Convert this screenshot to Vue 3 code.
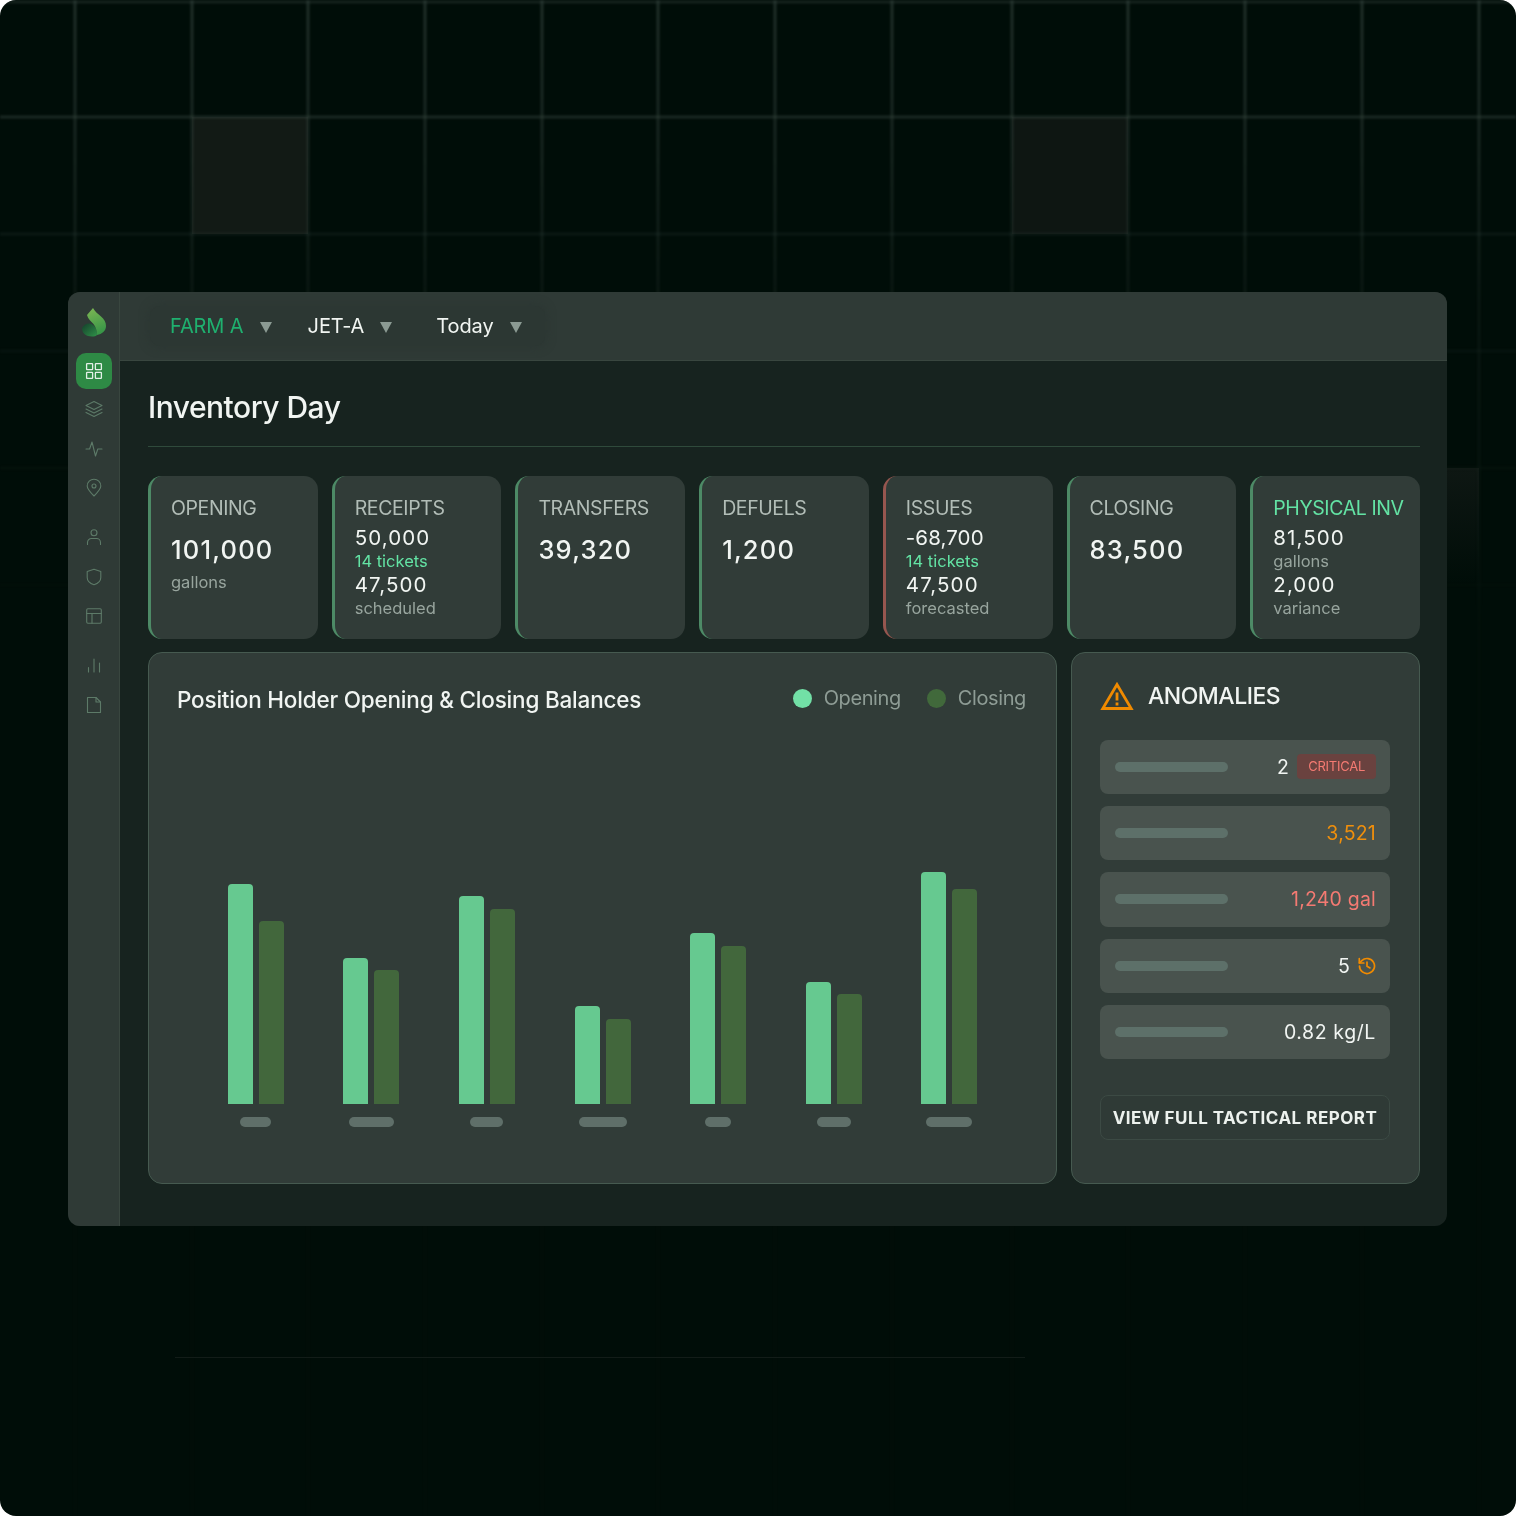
<script setup>
const gridX = [75, 192, 308, 425, 542, 658, 775, 892, 1012, 1128, 1245, 1362, 1479]
const gridY = [2, 117, 234, 351, 468, 585]

const navIcons = [
  { id: 'layers', gap: false },
  { id: 'pulse', gap: false },
  { id: 'pin', gap: true },
  { id: 'user', gap: false },
  { id: 'shield', gap: false },
  { id: 'layout', gap: true },
  { id: 'bars', gap: false },
  { id: 'file', gap: false }
]

const filters = [
  { label: 'FARM A', active: true },
  { label: 'JET-A', active: false },
  { label: 'Today', active: false }
]

const cards = [
  { title: 'OPENING', big: '101,000', sub: 'gallons' },
  { title: 'RECEIPTS', lines: [['50,000', '14 tickets', true], ['47,500', 'scheduled', false]] },
  { title: 'TRANSFERS', big: '39,320' },
  { title: 'DEFUELS', big: '1,200' },
  { title: 'ISSUES', red: true, lines: [['-68,700', '14 tickets', true], ['47,500', 'forecasted', false]] },
  { title: 'CLOSING', big: '83,500' },
  { title: 'PHYSICAL INV', mint: true, lines: [['81,500', 'gallons', false], ['2,000', 'variance', false]] }
]

const bars = [
  { open: 220, close: 183, label: 31 },
  { open: 146, close: 134, label: 45 },
  { open: 208, close: 195, label: 33 },
  { open: 98, close: 85, label: 48 },
  { open: 171, close: 158, label: 26 },
  { open: 122, close: 110, label: 34 },
  { open: 232, close: 215, label: 46 }
]
</script>

<template>
  <div class="page">
    <svg class="backdrop" width="1516" height="1516" viewBox="0 0 1516 1516">
      <defs>
        <linearGradient id="fade" x1="0" y1="0" x2="0" y2="1">
          <stop offset="0" stop-color="#34443e" stop-opacity="0.6" />
          <stop offset="0.1" stop-color="#34443e" stop-opacity="0.42" />
          <stop offset="0.2" stop-color="#34443e" stop-opacity="0.18" />
          <stop offset="0.4" stop-color="#34443e" stop-opacity="0.05" />
          <stop offset="1" stop-color="#34443e" stop-opacity="0.02" />
        </linearGradient>
        <linearGradient id="sidefade" x1="0" y1="0" x2="0" y2="1">
          <stop offset="0" stop-color="#0e1713" />
          <stop offset="1" stop-color="#000d08" />
        </linearGradient>
      </defs>
      <rect x="192" y="117" width="116" height="117" fill="#121a15" />
      <rect x="1012" y="117" width="116" height="117" fill="#0e1612" />
      <rect x="1447" y="468" width="32" height="117" fill="url(#sidefade)" />
      <g class="soft">
        <rect v-for="x in gridX" :key="x" :x="x - 1.5" y="0" width="3" height="1516" fill="url(#fade)" />
        <rect v-for="(y, i) in gridY" :key="y" x="0" :y="y - 1.5" width="1516" height="3" fill="#34443e" :opacity="[0.4, 0.5, 0.22, 0.12, 0.07, 0.04][i]" />
      </g>
      <rect x="175" y="1357" width="850" height="1" fill="#121c18" />
    </svg>

    <div class="window">
      <aside class="sidebar">
        <svg class="logo" width="26" height="30" viewBox="0 0 26 30">
          <defs>
            <linearGradient id="leafTop" x1="0.3" y1="0" x2="0.6" y2="1">
              <stop offset="0" stop-color="#79b553" />
              <stop offset="1" stop-color="#359447" />
            </linearGradient>
            <linearGradient id="leafLow" x1="0" y1="0" x2="1" y2="1">
              <stop offset="0" stop-color="#143f2b" />
              <stop offset="1" stop-color="#2f9048" />
            </linearGradient>
          </defs>
          <path d="M1 21c2-4 7-6 11-3 3 2 4 6 4 10-1 1-3 1.5-5 1.5-6 0-10-3-10-8.500z" fill="url(#leafLow)" />
          <path d="M12 1L6 8c1 4 4 6 6.5 9 2.5 3 3.5 7 3.5 11 5-1 9-4 9-9 0-4-2-7-5-9.5C17 7 14 4.5 12 1z" fill="url(#leafTop)" />
        </svg>
        <div class="nav-active">
          <svg width="18" height="18" viewBox="0 0 18 18" fill="none" stroke="#e4f0e8" stroke-width="1.3">
            <rect x="1.6" y="1.6" width="6" height="6" rx="0.6" />
            <rect x="10.4" y="1.6" width="6" height="6" rx="0.6" />
            <rect x="1.6" y="10.4" width="6" height="6" rx="0.6" />
            <rect x="10.4" y="10.4" width="6" height="6" rx="0.6" />
          </svg>
        </div>
        <div v-for="item in navIcons" :key="item.id" class="nav-item" :class="{ spaced: item.gap }">
          <svg width="20" height="20" viewBox="0 0 20 20" fill="none" stroke="#5d7a68" stroke-width="1.1" stroke-linecap="round" stroke-linejoin="round">
            <template v-if="item.id === 'layers'">
              <path d="M10 2.5l8 4-8 4-8-4z" />
              <path d="M2 10l8 4 8-4" />
              <path d="M2 13.4l8 4 8-4" />
            </template>
            <path v-else-if="item.id === 'pulse'" d="M2 10h3.6l2.4-7 3.5 14 2.3-7H18" />
            <template v-else-if="item.id === 'pin'">
              <path d="M10 18c-4-4-6.8-7-6.8-10a6.8 6.8 0 0 1 13.6 0c0 3-2.8 6-6.8 10z" />
              <circle cx="10" cy="8" r="2" />
            </template>
            <template v-else-if="item.id === 'user'">
              <circle cx="10" cy="5.8" r="3" />
              <path d="M3.5 17.5v-2a4 4 0 0 1 4-4h5a4 4 0 0 1 4 4v2" />
            </template>
            <path v-else-if="item.id === 'shield'" d="M10 2.2l6.8 2.3v6c0 3.6-3 6-6.8 7.3-3.8-1.3-6.8-3.7-6.8-7.3v-6z" />
            <template v-else-if="item.id === 'layout'">
              <rect x="2.7" y="2.7" width="14.6" height="14.6" rx="1.2" />
              <path d="M2.7 7.5h14.6M8 7.5v9.800" />
            </template>
            <path v-else-if="item.id === 'bars'" d="M4.5 17v-4.500M10 17V4M15.500 17V8" />
            <template v-else>
              <path d="M3.5 2.500h8.500l4.500 4.500v10.500h-13z" />
              <path d="M12 2.500V7h4.500" />
            </template>
          </svg>
        </div>
      </aside>

      <div class="body">
        <header class="topbar">
          <div class="filters">
            <div v-for="f in filters" :key="f.label" class="filter" :class="{ active: f.active }">
              <span>{{ f.label }}</span>
              <i class="caret"></i>
            </div>
          </div>
        </header>

        <main class="content">
          <h1 class="title">Inventory Day</h1>

          <section class="cards">
            <div v-for="c in cards" :key="c.title" class="card" :class="{ red: c.red }">
              <div class="card-title" :class="{ mint: c.mint }">{{ c.title }}</div>
              <template v-if="c.big">
                <div class="card-big">{{ c.big }}</div>
                <div v-if="c.sub" class="card-sub">{{ c.sub }}</div>
              </template>
              <div v-else class="card-lines">
                <template v-for="l in c.lines" :key="l[0]">
                  <div class="card-num" :class="{ negative: l[0].startsWith('-') }">{{ l[0] }}</div>
                  <div class="card-note" :class="{ mint: l[2] }">{{ l[1] }}</div>
                </template>
              </div>
            </div>
          </section>

          <section class="lower">
            <div class="chart panel">
              <div class="chart-head">
                <h2>Position Holder Opening &amp; Closing Balances</h2>
                <div class="legend">
                  <span class="legend-item"><i class="dot open"></i>Opening</span>
                  <span class="legend-item"><i class="dot close"></i>Closing</span>
                </div>
              </div>
              <div class="plot">
                <div v-for="(b, i) in bars" :key="i" class="group">
                  <div class="pair">
                    <div class="bar open" :style="{ height: b.open + 'px' }"></div>
                    <div class="bar close" :style="{ height: b.close + 'px' }"></div>
                  </div>
                  <div class="tick" :style="{ width: b.label + 'px' }"></div>
                </div>
              </div>
            </div>

            <div class="anomalies panel">
              <div class="anom-head">
                <svg width="34" height="30" viewBox="0 0 34 30" fill="none">
                  <path d="M17 3.5L2.8 27.500h28.400z" stroke="#f08a00" stroke-width="2.8" />
                  <path d="M17 11.5v8M17 21.500v3" stroke="#f08a00" stroke-width="2.8" />
                </svg>
                <h2>ANOMALIES</h2>
              </div>
              <div class="rows">
                <div class="row">
                  <i class="skeleton"></i>
                  <span class="val">2</span>
                  <span class="badge">CRITICAL</span>
                </div>
                <div class="row"><i class="skeleton"></i><span class="val orange">3,521</span></div>
                <div class="row"><i class="skeleton"></i><span class="val coral">1,240 gal</span></div>
                <div class="row">
                  <i class="skeleton"></i>
                  <span class="val">5</span>
                  <svg class="history" width="18" height="18" viewBox="0 0 18 18" fill="none" stroke="#f08a00" stroke-width="1.7" stroke-linecap="round" stroke-linejoin="round">
                    <path d="M1.5 9a7.5 7.5 0 1 0 2.3-5.400L1.500 5.800" />
                    <path d="M1.300 1.500v4.500h4.500" />
                    <path d="M9 5v4.200l3 1.700" />
                  </svg>
                </div>
                <div class="row"><i class="skeleton"></i><span class="val wide">0.82 kg/L</span></div>
              </div>
              <button class="report">VIEW FULL TACTICAL REPORT</button>
            </div>
          </section>
        </main>
      </div>
    </div>
  </div>
</template>

<style>
html, body {
  margin: 0;
  background: #fff;
}
</style>

<style scoped>
.page {
  position: relative;
  width: 1516px;
  height: 1516px;
  box-sizing: border-box;
  padding: 292px 69px 0 68px;
  background: #000d08;
  border-radius: 16px;
  overflow: hidden;
  font-family: Inter, "Liberation Sans", sans-serif;
  color: #f1f5f2;
}
.backdrop {
  position: absolute;
  left: 0;
  top: 0;
}
.soft {
  filter: blur(0.8px);
}
.window {
  position: relative;
  display: flex;
  height: 934px;
  border-radius: 12px;
  overflow: hidden;
  background: #17231f;
}
.sidebar {
  width: 52px;
  flex: none;
  box-sizing: border-box;
  display: flex;
  flex-direction: column;
  align-items: center;
  padding-top: 15px;
  background: #2f3a36;
  border-right: 1px solid #39463f;
}
.logo {
  display: block;
}
.nav-active {
  width: 36px;
  height: 36px;
  margin-top: 16px;
  margin-bottom: 10px;
  border-radius: 10px;
  background: #2e8a45;
  display: flex;
  align-items: center;
  justify-content: center;
}
.nav-item {
  height: 20px;
  margin-bottom: 19.5px;
}
.nav-item.spaced {
  margin-bottom: 29px;
}
.body {
  flex: 1;
  min-width: 0;
  display: flex;
  flex-direction: column;
}
.topbar {
  height: 69px;
  flex: none;
  box-sizing: border-box;
  display: flex;
  align-items: center;
  padding-left: 30px;
  background: #2f3a36;
  border-bottom: 1px solid #39463f;
}
.filters {
  display: flex;
  height: 40px;
  width: 395px;
  box-sizing: border-box;
  align-items: center;
  padding: 0 20px;
  border-radius: 10px;
  background: #2c3733;
  box-shadow: 0 0 8px 2px #2c3733;
}
.filter {
  display: flex;
  align-items: center;
  font-size: 20px;
  letter-spacing: -0.1px;
}
.filter:nth-child(1) {
  margin-right: 36px;
}
.filter:nth-child(2) {
  margin-right: 44px;
}
.filter.active {
  color: #1fb06f;
}
.caret {
  display: block;
  width: 0;
  height: 0;
  margin-left: 16px;
  margin-top: 3px;
  border-left: 6px solid transparent;
  border-right: 6px solid transparent;
  border-top: 11px solid #8b9a93;
}
.content {
  padding: 0 27px 0 28px;
}
.title {
  margin: 0;
  height: 86px;
  box-sizing: border-box;
  padding-top: 26px;
  font-size: 30px;
  line-height: 40px;
  font-weight: 500;
  letter-spacing: -0.5px;
  border-bottom: 1px solid #2f4a3b;
}
.cards {
  display: grid;
  grid-template-columns: repeat(7, 1fr);
  gap: 14px;
  margin-top: 29px;
}
.card {
  height: 163px;
  box-sizing: border-box;
  padding: 19px 4px 0 20px;
  border-radius: 14px;
  border-left: 3px solid #4d8a66;
  background: #313c38;
}
.card.red {
  border-left-color: #96564f;
}
.card-title {
  font-size: 19.5px;
  line-height: 26px;
  letter-spacing: -0.4px;
  color: #b2bdb7;
  white-space: nowrap;
}
.mint {
  color: #63e3a4 !important;
}
.card-big {
  margin-top: 12px;
  font-size: 25.5px;
  line-height: 34px;
  font-weight: 500;
  letter-spacing: 1.2px;
}
.card-sub {
  margin-top: 4px;
  font-size: 16.5px;
  line-height: 22px;
  color: #98a59e;
}
.card-lines {
  margin-top: 4px;
}
.card-num {
  font-size: 20.5px;
  line-height: 26px;
  letter-spacing: 1.1px;
}
.card-num.negative {
  letter-spacing: 0.1px;
}
.card-note {
  font-size: 16.5px;
  line-height: 21px;
  color: #98a59e;
}
.lower {
  display: grid;
  grid-template-columns: 909px 349px;
  gap: 14px;
  margin-top: 13px;
}
.panel {
  height: 532px;
  box-sizing: border-box;
  border: 1px solid #465a50;
  border-radius: 14px;
  background: #313c38;
}
.chart {
  display: flex;
  flex-direction: column;
  padding: 0 30px 0 28px;
}
.chart-head {
  display: flex;
  align-items: center;
  justify-content: space-between;
  padding-top: 32px;
}
.chart-head h2 {
  margin: 0;
  font-size: 22.5px;
  line-height: 30px;
  font-weight: 500;
  letter-spacing: -0.2px;
}
.legend {
  display: flex;
  gap: 26px;
  margin-top: -4px;
  font-size: 20px;
  letter-spacing: -0.4px;
  color: #8e9c95;
}
.legend-item {
  display: flex;
  align-items: center;
  gap: 12px;
}
.dot {
  display: block;
  width: 19px;
  height: 19px;
  border-radius: 50%;
}
.dot.open {
  background: #72e0a6;
}
.dot.close {
  background: #41693b;
}
.plot {
  display: grid;
  grid-template-columns: repeat(7, 115.6px);
  justify-content: center;
  margin: 42px -8px 0 -6px;
  height: 370px;
}
.group {
  display: flex;
  flex-direction: column;
  align-items: center;
  justify-content: flex-end;
}
.pair {
  display: flex;
  align-items: flex-end;
  gap: 6px;
}
.bar {
  width: 25px;
  border-radius: 4px 4px 0 0;
}
.bar.open {
  background: #66c990;
}
.bar.close {
  background: #42673c;
}
.tick {
  height: 10px;
  margin-top: 13px;
  border-radius: 5px;
  background: #5f6f69;
}
.anomalies {
  padding: 0 29px 0 28px;
}
.anom-head {
  display: flex;
  align-items: center;
  gap: 14px;
  height: 85px;
  margin-bottom: 1.5px;
}
.anom-head h2 {
  margin: 0;
  font-size: 23px;
  font-weight: 500;
  letter-spacing: -0.5px;
}
.rows {
  display: flex;
  flex-direction: column;
  gap: 12px;
}
.row {
  display: flex;
  align-items: center;
  height: 54.4px;
  padding: 0 14px 0 15px;
  border-radius: 8px;
  background: #49534e;
}
.skeleton {
  width: 113px;
  height: 10px;
  margin-right: auto;
  border-radius: 5px;
  background: #5d7069;
}
.val {
  font-size: 19.5px;
  letter-spacing: 0.2px;
}
.wide {
  letter-spacing: 0.6px;
}
.orange {
  color: #f08f0c;
}
.coral {
  color: #f47a72;
}
.badge {
  margin-left: 8px;
  padding: 0 11px;
  height: 25px;
  line-height: 25px;
  font-size: 13px;
  letter-spacing: -0.25px;
  border-radius: 4px;
  color: #f47a72;
  background: #6a423f;
}
.history {
  margin-left: 8px;
}
.report {
  display: block;
  width: 100%;
  height: 45px;
  margin-top: 36px;
  padding: 0;
  border: 1px solid #3c4a44;
  border-radius: 8px;
  background: #2f3a36;
  color: #edf2ee;
  font-family: inherit;
  font-size: 17px;
  font-weight: 700;
  letter-spacing: 0.5px;
  white-space: nowrap;
}
</style>
